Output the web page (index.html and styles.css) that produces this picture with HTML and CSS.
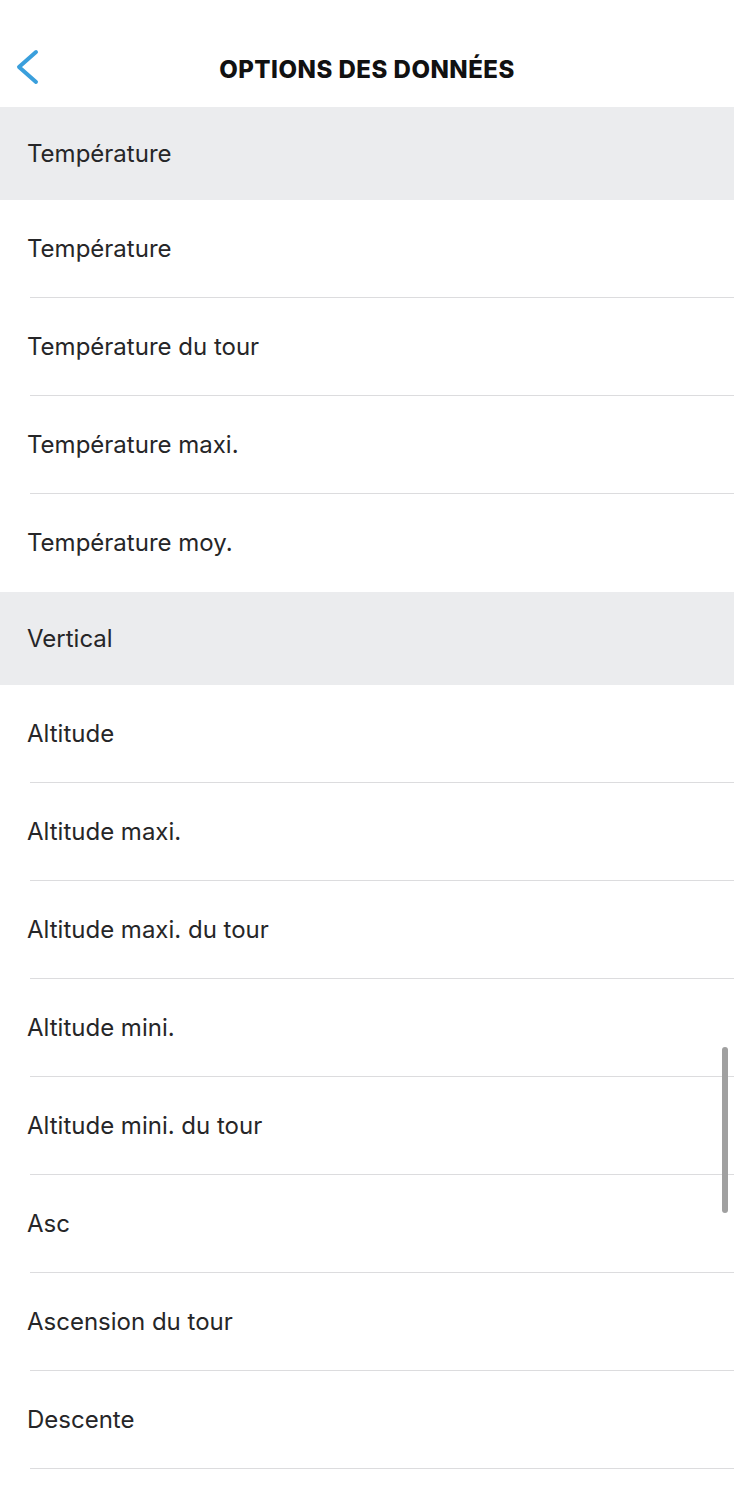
FILE: index.html
```html
<!DOCTYPE html>
<html lang="fr">
<head>
<meta charset="utf-8">
<title>Options des données</title>
<link rel="stylesheet" href="styles.css">
</head>
<body>
<div class="screen">
  <header class="topbar">
    <button class="back" aria-label="Retour">
      <svg width="26" height="40" viewBox="0 0 26 40"><polyline points="21,4 4,19 21,34" fill="none" stroke="#3a9fdc" stroke-width="4" stroke-linecap="round" stroke-linejoin="round"/></svg>
    </button>
    <h1 class="title">OPTIONS DES DONNÉES</h1>
  </header>
  <div class="list">
    <div class="section">Température</div>
    <div class="row">Température</div>
    <div class="row">Température du tour</div>
    <div class="row">Température maxi.</div>
    <div class="row last">Température moy.</div>
    <div class="section">Vertical</div>
    <div class="row">Altitude</div>
    <div class="row">Altitude maxi.</div>
    <div class="row">Altitude maxi. du tour</div>
    <div class="row">Altitude mini.</div>
    <div class="row">Altitude mini. du tour</div>
    <div class="row">Asc</div>
    <div class="row">Ascension du tour</div>
    <div class="row">Descente</div>
  </div>
  <div class="scrollbar"></div>
</div>
</body>
</html>
```
FILE: styles.css
```css
html, body {
  margin: 0;
  padding: 0;
  background: #ffffff;
}
body {
  font-family: "Inter", "Noto Sans", sans-serif;
  color: #222222;
}
.screen {
  position: relative;
  width: 734px;
  min-height: 1500px;
  overflow: hidden;
}
.topbar {
  height: 107px;
  display: flex;
  align-items: center;
  justify-content: center;
  position: relative;
}
.back {
  position: absolute;
  left: 15px;
  top: 48px;
  padding: 0;
  border: 0;
  background: none;
  width: 26px;
  height: 40px;
}
.back svg { display: block; }
.title {
  margin: 0;
  margin-top: 32px;
  font-size: 24px;
  font-weight: 800;
  letter-spacing: 0.5px;
  color: #111111;
}
.list {
  display: flex;
  flex-direction: column;
}
.section {
  height: 93px;
  background: #ebecee;
  display: flex;
  align-items: center;
  padding-left: 27px;
  font-size: 24px;
  color: #262628;
}
.row {
  height: 97px;
  margin-bottom: 1px;
  display: flex;
  align-items: center;
  padding-left: 27px;
  font-size: 24px;
  color: #262628;
  position: relative;
}
.row::after {
  content: "";
  position: absolute;
  left: 30px;
  right: 0;
  bottom: -1px;
  height: 1px;
  background: #dcdcde;
}
.row.last::after {
  display: none;
}
.scrollbar {
  position: absolute;
  left: 722px;
  top: 1047px;
  width: 6px;
  height: 166px;
  border-radius: 3px;
  background: #a0a0a0;
}
```
